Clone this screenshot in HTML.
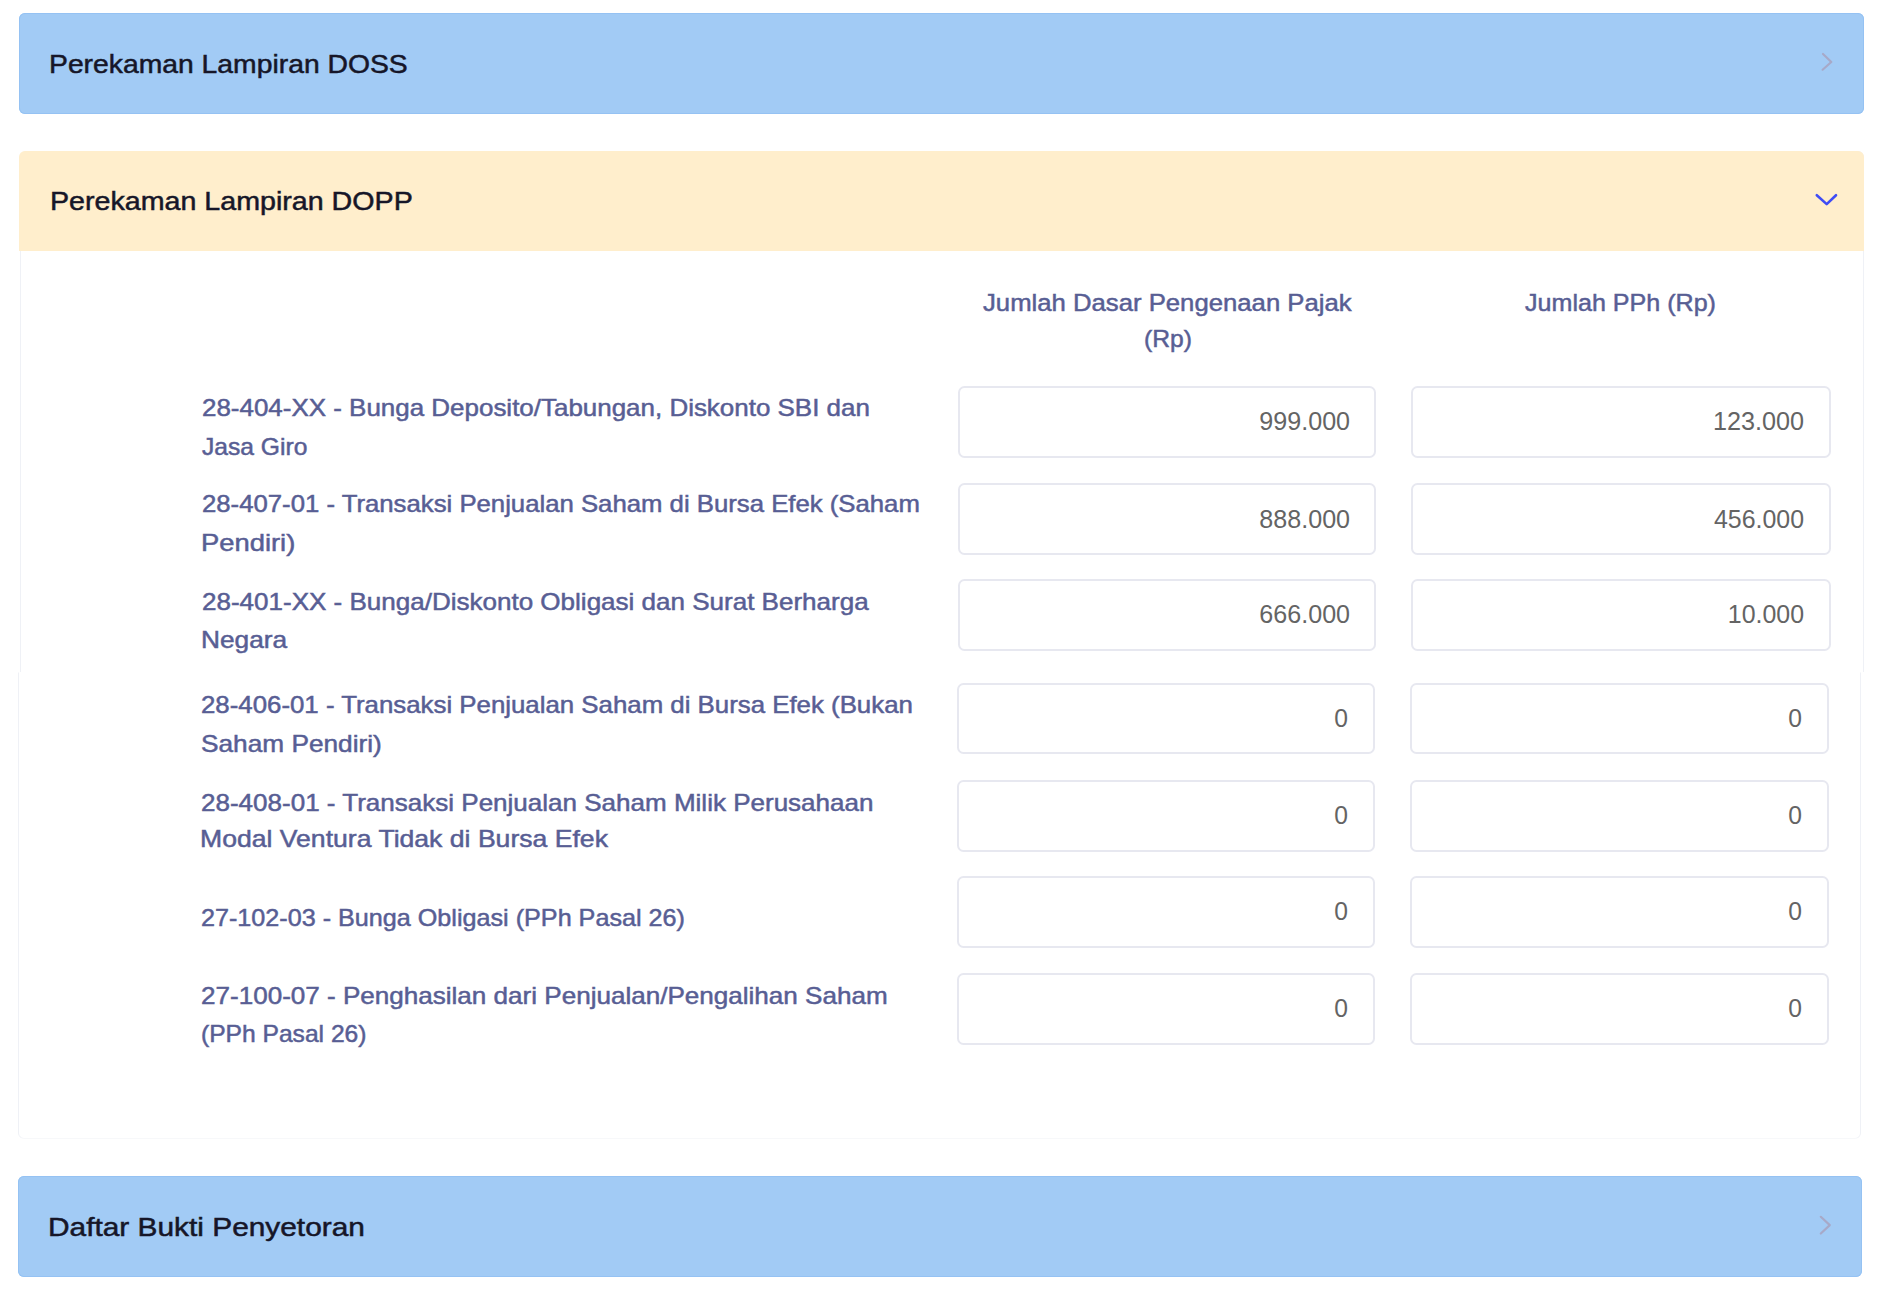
<!DOCTYPE html>
<html><head><meta charset="utf-8"><title>DOPP</title><style>
html,body{margin:0;padding:0;background:#ffffff;width:1885px;height:1293px;overflow:hidden;position:relative;}
body{font-family:"Liberation Sans",sans-serif;}
.t{position:absolute;white-space:nowrap;}
.bar{position:absolute;background:#a2cbf5;box-shadow:inset 0 0 0 1px #95c2f3;border-radius:6px;}
.ybar{position:absolute;background:#ffeecc;border-radius:6px 6px 0 0;}
.card{position:absolute;background:#ffffff;border:1px solid #eff1f6;border-radius:6px;box-sizing:border-box;}
.box{position:absolute;box-sizing:border-box;border:2px solid #e7e8f0;border-radius:6.5px;background:#ffffff;}
.ic{position:absolute;}
</style></head>
<body>
<div class="bar" style="left:19px;top:13px;width:1845px;height:101px;"></div>
<svg class="ic" style="left:1815px;top:48px" width="24" height="28" viewBox="0 0 24 28"><polyline points="8,6 16.3,14 7.6,21.7" fill="none" stroke="#a7a9c8" stroke-width="2.2" stroke-linecap="round" stroke-linejoin="round"/></svg>
<div class="card" style="left:19.5px;top:151px;width:1844.5px;height:987px;clip-path:inset(0 0 466px 0);"></div>
<div class="card" style="left:17.5px;top:151px;width:1843.5px;height:987.5px;clip-path:inset(521.5px 0 0 0);"></div>
<div class="ybar" style="left:19px;top:151px;width:1845px;height:100px;"></div>
<svg class="ic" style="left:1810px;top:185px" width="34" height="28" viewBox="0 0 34 28"><polyline points="6.8,10.2 16.7,19.1 26,10.2" fill="none" stroke="#3f4cf5" stroke-width="2.6" stroke-linecap="round" stroke-linejoin="round"/></svg>
<div class="bar" style="left:18px;top:1176px;width:1843.5px;height:101px;"></div>
<svg class="ic" style="left:1810px;top:1205px" width="24" height="40" viewBox="0 0 24 40"><polyline points="10.8,11.8 19.8,20.1 10.8,28.5" fill="none" stroke="#a7a9c8" stroke-width="2.2" stroke-linecap="round" stroke-linejoin="round"/></svg>
<div class="t" id="h1" style="top:51.01px;font-size:26px;line-height:26px;font-weight:400;color:#161628;-webkit-text-stroke:0.5px #161628;left:49.00px;transform:scaleX(1.0887);transform-origin:0 0;">Perekaman Lampiran DOSS</div>
<div class="t" id="h2" style="top:187.91px;font-size:26px;line-height:26px;font-weight:400;color:#161628;-webkit-text-stroke:0.5px #161628;left:49.50px;transform:scaleX(1.1009);transform-origin:0 0;">Perekaman Lampiran DOPP</div>
<div class="t" id="h3" style="top:1214.21px;font-size:26px;line-height:26px;font-weight:400;color:#161628;-webkit-text-stroke:0.5px #161628;left:47.50px;transform:scaleX(1.1480);transform-origin:0 0;">Daftar Bukti Penyetoran</div>
<div class="t" id="c1" style="top:291.45px;font-size:24.5px;line-height:24.5px;font-weight:400;color:#585e94;-webkit-text-stroke:0.5px #585e94;left:982.50px;transform:scaleX(1.0490);transform-origin:0 0;">Jumlah Dasar Pengenaan Pajak</div>
<div class="t" id="c2" style="top:327.45px;font-size:24.5px;line-height:24.5px;font-weight:400;color:#585e94;-webkit-text-stroke:0.5px #585e94;left:1144.00px;transform:scaleX(1.0058);transform-origin:0 0;">(Rp)</div>
<div class="t" id="c3" style="top:290.55px;font-size:24.5px;line-height:24.5px;font-weight:400;color:#585e94;-webkit-text-stroke:0.5px #585e94;left:1525.00px;transform:scaleX(1.0237);transform-origin:0 0;">Jumlah PPh (Rp)</div>
<div class="t" id="r1a" style="top:396.37px;font-size:24px;line-height:24px;font-weight:400;color:#585e94;-webkit-text-stroke:0.5px #585e94;left:202.00px;transform:scaleX(1.0812);transform-origin:0 0;">28-404-XX - Bunga Deposito/Tabungan, Diskonto SBI dan</div>
<div class="t" id="r1b" style="top:435.37px;font-size:24px;line-height:24px;font-weight:400;color:#585e94;-webkit-text-stroke:0.5px #585e94;left:202.00px;transform:scaleX(1.0257);transform-origin:0 0;">Jasa Giro</div>
<div class="t" id="r2a" style="top:492.07px;font-size:24px;line-height:24px;font-weight:400;color:#585e94;-webkit-text-stroke:0.5px #585e94;left:202.00px;transform:scaleX(1.0719);transform-origin:0 0;">28-407-01 - Transaksi Penjualan Saham di Bursa Efek (Saham</div>
<div class="t" id="r2b" style="top:531.07px;font-size:24px;line-height:24px;font-weight:400;color:#585e94;-webkit-text-stroke:0.5px #585e94;left:201.00px;transform:scaleX(1.1403);transform-origin:0 0;">Pendiri)</div>
<div class="t" id="r3a" style="top:590.07px;font-size:24px;line-height:24px;font-weight:400;color:#585e94;-webkit-text-stroke:0.5px #585e94;left:202.00px;transform:scaleX(1.0839);transform-origin:0 0;">28-401-XX - Bunga/Diskonto Obligasi dan Surat Berharga</div>
<div class="t" id="r3b" style="top:628.47px;font-size:24px;line-height:24px;font-weight:400;color:#585e94;-webkit-text-stroke:0.5px #585e94;left:201.00px;transform:scaleX(1.0938);transform-origin:0 0;">Negara</div>
<div class="t" id="r4a" style="top:693.17px;font-size:24px;line-height:24px;font-weight:400;color:#585e94;-webkit-text-stroke:0.5px #585e94;left:200.50px;transform:scaleX(1.0758);transform-origin:0 0;">28-406-01 - Transaksi Penjualan Saham di Bursa Efek (Bukan</div>
<div class="t" id="r4b" style="top:732.47px;font-size:24px;line-height:24px;font-weight:400;color:#585e94;-webkit-text-stroke:0.5px #585e94;left:200.50px;transform:scaleX(1.0928);transform-origin:0 0;">Saham Pendiri)</div>
<div class="t" id="r5a" style="top:790.87px;font-size:24px;line-height:24px;font-weight:400;color:#585e94;-webkit-text-stroke:0.5px #585e94;left:200.50px;transform:scaleX(1.0840);transform-origin:0 0;">28-408-01 - Transaksi Penjualan Saham Milik Perusahaan</div>
<div class="t" id="r5b" style="top:827.07px;font-size:24px;line-height:24px;font-weight:400;color:#585e94;-webkit-text-stroke:0.5px #585e94;left:199.50px;transform:scaleX(1.1079);transform-origin:0 0;">Modal Ventura Tidak di Bursa Efek</div>
<div class="t" id="r6a" style="top:905.97px;font-size:24px;line-height:24px;font-weight:400;color:#585e94;-webkit-text-stroke:0.5px #585e94;left:200.50px;transform:scaleX(1.0483);transform-origin:0 0;">27-102-03 - Bunga Obligasi (PPh Pasal 26)</div>
<div class="t" id="r7a" style="top:983.67px;font-size:24px;line-height:24px;font-weight:400;color:#585e94;-webkit-text-stroke:0.5px #585e94;left:200.50px;transform:scaleX(1.0856);transform-origin:0 0;">27-100-07 - Penghasilan dari Penjualan/Pengalihan Saham</div>
<div class="t" id="r7b" style="top:1022.17px;font-size:24px;line-height:24px;font-weight:400;color:#585e94;-webkit-text-stroke:0.5px #585e94;left:200.50px;transform:scaleX(1.0251);transform-origin:0 0;">(PPh Pasal 26)</div>
<div class="box" style="left:958px;top:385.5px;width:418px;height:72.0px;"></div>
<div class="box" style="left:1411px;top:385.5px;width:420px;height:72.0px;"></div>
<div class="t" id="v0a" style="top:409.07px;font-size:25.2px;line-height:25.2px;font-weight:400;color:#646464;right:535.00px;transform:scaleX(0.9961);transform-origin:100% 0;">999.000</div>
<div class="t" id="v0b" style="top:409.07px;font-size:25.2px;line-height:25.2px;font-weight:400;color:#646464;right:80.50px;transform:scaleX(1.0005);transform-origin:100% 0;">123.000</div>
<div class="box" style="left:958px;top:483px;width:418px;height:72px;"></div>
<div class="box" style="left:1411px;top:483px;width:420px;height:72px;"></div>
<div class="t" id="v1a" style="top:507.07px;font-size:25.2px;line-height:25.2px;font-weight:400;color:#646464;right:535.00px;transform:scaleX(0.9961);transform-origin:100% 0;">888.000</div>
<div class="t" id="v1b" style="top:507.07px;font-size:25.2px;line-height:25.2px;font-weight:400;color:#646464;right:80.50px;transform:scaleX(0.9891);transform-origin:100% 0;">456.000</div>
<div class="box" style="left:958px;top:578.5px;width:418px;height:72.0px;"></div>
<div class="box" style="left:1411px;top:578.5px;width:420px;height:72.0px;"></div>
<div class="t" id="v2a" style="top:602.37px;font-size:25.2px;line-height:25.2px;font-weight:400;color:#646464;right:535.00px;transform:scaleX(0.9960);transform-origin:100% 0;">666.000</div>
<div class="t" id="v2b" style="top:602.37px;font-size:25.2px;line-height:25.2px;font-weight:400;color:#646464;right:80.50px;transform:scaleX(0.9891);transform-origin:100% 0;">10.000</div>
<div class="box" style="left:956.5px;top:682.5px;width:418px;height:71.5px;"></div>
<div class="box" style="left:1409.5px;top:682.5px;width:419px;height:71.5px;"></div>
<div class="t" id="v3a" style="top:705.97px;font-size:25.2px;line-height:25.2px;font-weight:400;color:#646464;right:537.00px;transform:scaleX(0.9786);transform-origin:100% 0;">0</div>
<div class="t" id="v3b" style="top:705.97px;font-size:25.2px;line-height:25.2px;font-weight:400;color:#646464;right:82.50px;transform:scaleX(0.9786);transform-origin:100% 0;">0</div>
<div class="box" style="left:956.5px;top:779.5px;width:418px;height:72.0px;"></div>
<div class="box" style="left:1409.5px;top:779.5px;width:419px;height:72.0px;"></div>
<div class="t" id="v4a" style="top:803.37px;font-size:25.2px;line-height:25.2px;font-weight:400;color:#646464;right:537.00px;transform:scaleX(0.9786);transform-origin:100% 0;">0</div>
<div class="t" id="v4b" style="top:803.37px;font-size:25.2px;line-height:25.2px;font-weight:400;color:#646464;right:82.50px;transform:scaleX(0.9786);transform-origin:100% 0;">0</div>
<div class="box" style="left:956.5px;top:875.5px;width:418px;height:72.0px;"></div>
<div class="box" style="left:1409.5px;top:875.5px;width:419px;height:72.0px;"></div>
<div class="t" id="v5a" style="top:898.87px;font-size:25.2px;line-height:25.2px;font-weight:400;color:#646464;right:537.00px;transform:scaleX(0.9786);transform-origin:100% 0;">0</div>
<div class="t" id="v5b" style="top:898.87px;font-size:25.2px;line-height:25.2px;font-weight:400;color:#646464;right:82.50px;transform:scaleX(0.9786);transform-origin:100% 0;">0</div>
<div class="box" style="left:956.5px;top:973px;width:418px;height:72px;"></div>
<div class="box" style="left:1409.5px;top:973px;width:419px;height:72px;"></div>
<div class="t" id="v6a" style="top:995.57px;font-size:25.2px;line-height:25.2px;font-weight:400;color:#646464;right:537.00px;transform:scaleX(0.9786);transform-origin:100% 0;">0</div>
<div class="t" id="v6b" style="top:995.57px;font-size:25.2px;line-height:25.2px;font-weight:400;color:#646464;right:82.50px;transform:scaleX(0.9786);transform-origin:100% 0;">0</div>
</body></html>
